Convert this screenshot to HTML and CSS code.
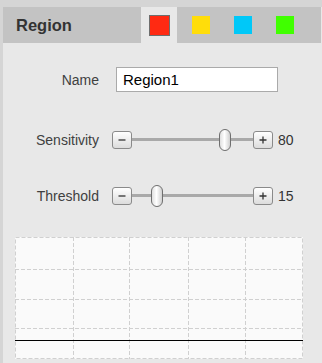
FILE: index.html
```html
<!DOCTYPE html>
<html>
<head>
<meta charset="utf-8">
<link rel="stylesheet" href="styles.css">
</head>
<body>
<div class="panel">
  <div class="header">
    <div class="title">Region</div>
    <div class="tabs">
      <div class="tab active"><span class="swatch red"></span></div>
      <div class="tab"><span class="swatch yellow"></span></div>
      <div class="tab"><span class="swatch cyan"></span></div>
      <div class="tab"><span class="swatch green"></span></div>
    </div>
  </div>
  <div class="content">
    <div class="row name-row">
      <label class="label">Name</label>
      <input class="text-input" type="text" value="Region1">
    </div>
    <div class="row slider-row sens-row">
      <span class="label">Sensitivity</span>
      <div class="slider">
        <button class="step"><svg width="10" height="10" viewBox="0 0 10 10"><path d="M1.5 5h7" stroke="#333" stroke-width="1.3"/></svg></button>
        <div class="track"><div class="rail"><span class="thumb" style="left:80%"></span></div></div>
        <button class="step"><svg width="10" height="10" viewBox="0 0 10 10"><path d="M1.5 5h7M5 1.5v7" stroke="#333" stroke-width="1.3"/></svg></button>
      </div>
      <span class="value">80</span>
    </div>
    <div class="row slider-row thr-row">
      <span class="label">Threshold</span>
      <div class="slider">
        <button class="step"><svg width="10" height="10" viewBox="0 0 10 10"><path d="M1.5 5h7" stroke="#333" stroke-width="1.3"/></svg></button>
        <div class="track"><div class="rail"><span class="thumb" style="left:15%"></span></div></div>
        <button class="step"><svg width="10" height="10" viewBox="0 0 10 10"><path d="M1.5 5h7M5 1.5v7" stroke="#333" stroke-width="1.3"/></svg></button>
      </div>
      <span class="value">15</span>
    </div>
    <div class="chart">
      <svg width="288" height="122" viewBox="0 0 288 122">
        <rect x="0" y="0" width="288" height="122" fill="#fafafa"/>
        <g stroke="#d0d0d0" stroke-width="1" stroke-dasharray="4 2" fill="none">
          <rect x="0.5" y="0.5" width="287" height="121"/>
          <line x1="58.5" y1="0" x2="58.5" y2="122"/>
          <line x1="114.5" y1="0" x2="114.5" y2="122"/>
          <line x1="173.5" y1="0" x2="173.5" y2="122"/>
          <line x1="230.5" y1="0" x2="230.5" y2="122"/>
          <line x1="0" y1="32.5" x2="288" y2="32.5"/>
          <line x1="0" y1="62.5" x2="288" y2="62.5"/>
          <line x1="0" y1="91.5" x2="288" y2="91.5"/>
        </g>
        <line x1="0" y1="103.5" x2="288" y2="103.5" stroke="#000" stroke-width="1"/>
      </svg>
    </div>
  </div>
</div>
</body>
</html>
```

FILE: styles.css
```css
html, body {
  margin: 0;
  padding: 0;
}
body {
  background: #d5d5d5;
  font-family: "Liberation Sans", Arial, sans-serif;
  width: 322px;
  height: 363px;
  overflow: hidden;
}
.panel {
  margin: 7px 0 0 3px;
  background: #e8e8e8;
  height: 356px;
}
.header {
  display: flex;
  height: 36px;
  background: #c3c3c3;
  margin-right: 1px;
}
.title {
  width: 135px;
  box-sizing: border-box;
  padding-left: 13px;
  font-size: 16.5px;
  font-weight: bold;
  color: #333;
  line-height: 36px;
}
.tabs {
  display: flex;
}
.tab {
  width: 36px;
  margin: 0 3px;
  display: flex;
  align-items: center;
  justify-content: center;
}
.tab.active {
  background: #e8e8e8;
}
.swatch {
  display: block;
  width: 18px;
  height: 18px;
}
.tab.active .swatch {
  width: 19px;
  height: 19px;
  border: 1px solid #6e6e6e;
  margin-top: 1px;
}
.red { background: #ff2a12; }
.yellow { background: #ffdd0a; }
.cyan { background: #00c8f8; }
.green { background: #40ff00; }

.content {
  padding-top: 24px;
}
.row {
  display: flex;
  align-items: center;
}
.label {
  width: 96px;
  text-align: right;
  font-size: 14px;
  color: #404040;
}
.name-row {
  height: 25px;
}
.text-input {
  margin-left: 17px;
  width: 162px;
  height: 25px;
  box-sizing: border-box;
  border: 1px solid #aaa;
  background: #fff;
  font-family: "Liberation Sans", Arial, sans-serif;
  font-size: 15px;
  color: #000;
  padding: 0 0 0 6px;
  outline: none;
}
.slider-row {
  height: 22px;
}
.sens-row {
  margin-top: 37px;
}
.thr-row {
  margin-top: 34px;
}
.slider {
  margin-left: 13px;
  display: flex;
  align-items: center;
  width: 161px;
}
.step {
  width: 20px;
  height: 18px;
  padding: 0;
  margin: 0;
  border: 1px solid #8a8a8a;
  border-radius: 3px;
  background: linear-gradient(#ffffff, #dcdcdc);
  display: flex;
  align-items: center;
  justify-content: center;
  box-sizing: border-box;
}
.step svg {
  display: block;
}
.track {
  flex: 1;
  height: 22px;
  display: flex;
  align-items: center;
  background: linear-gradient(transparent 9px, #a9a9a9 9px, #a9a9a9 12px, transparent 12px);
}
.rail {
  position: relative;
  height: 22px;
  margin: 0 13px 0 3px;
  flex: 1;
}
.thumb {
  position: absolute;
  top: 0;
  width: 12px;
  height: 22px;
  box-sizing: border-box;
  border: 1px solid #6f6f6f;
  border-radius: 6px;
  background: linear-gradient(90deg, #e0e0e0, #ffffff 45%, #d0d0d0);
}
.value {
  margin-left: 5px;
  font-size: 14px;
  color: #333;
}
.chart {
  margin: 30px 0 0 12px;
  width: 288px;
  height: 122px;
}
.chart svg {
  display: block;
}
```
